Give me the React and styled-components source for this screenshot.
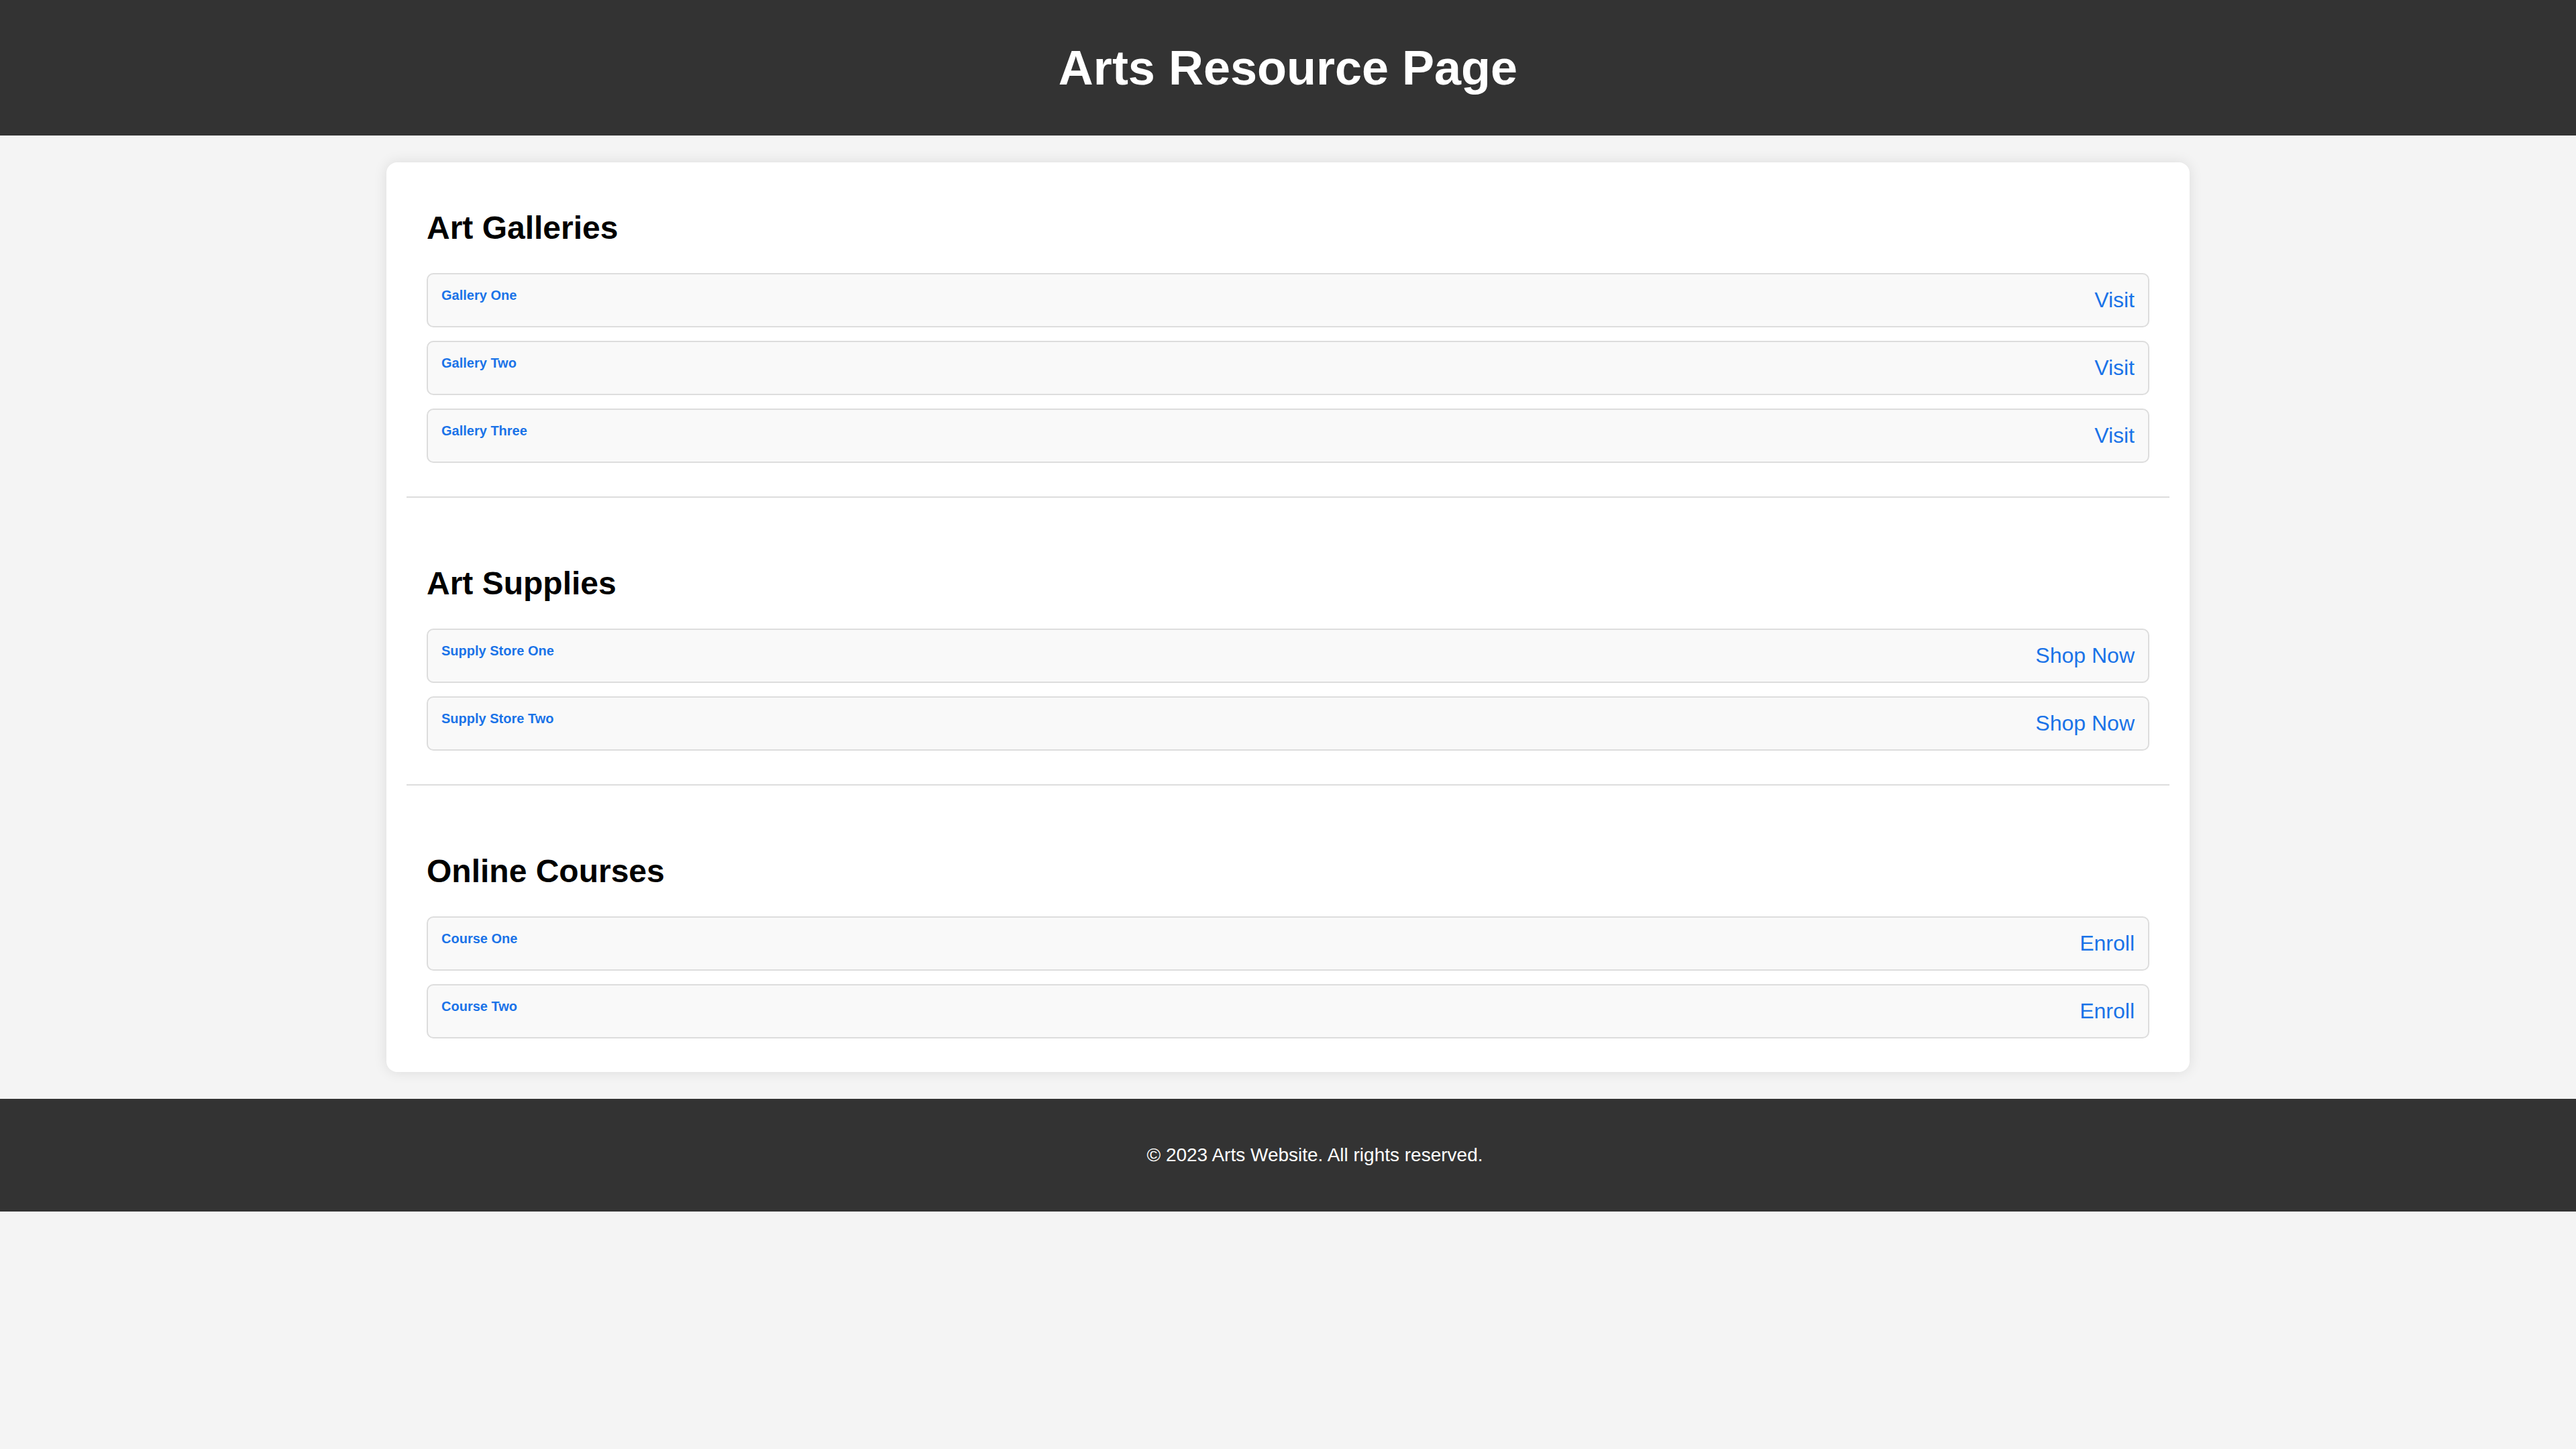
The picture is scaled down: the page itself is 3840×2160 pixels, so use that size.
import React from 'react';
import styled, { createGlobalStyle } from 'styled-components';

const GlobalStyle = createGlobalStyle`
  body {
    margin: 0;
    background: #f4f4f4;
    font-family: "Liberation Sans", Arial, Helvetica, sans-serif;
  }
`;

const Header = styled.header`
  background: #333;
  color: #fff;
  padding: 60px 0;
  text-align: center;
`;

const Titulo = styled.h1`
  margin: 0;
  font-size: 72px;
  line-height: 82px;
  font-weight: bold;
`;

const Card = styled.main`
  width: 70%;
  margin: 40px auto;
  padding: 30px;
  box-sizing: border-box;
  background: #fff;
  border-radius: 16px;
  box-shadow: 0 0 20px rgba(0, 0, 0, 0.1);
`;

const Secao = styled.section`
  padding: ${({ $first }) => ($first ? 0 : 60)}px 30px ${({ $last }) => ($last ? 0 : 30)}px;
  border-bottom: ${({ $last }) => ($last ? 'none' : '2px solid #ddd')};
`;

const SecaoTitulo = styled.h2`
  margin: 40px 0;
  font-size: 48px;
  font-weight: bold;
  color: #000;
`;

const Lista = styled.ul`
  list-style: none;
  margin: 0;
  padding: 0;
`;

const Item = styled.li`
  display: flex;
  justify-content: space-between;
  align-items: flex-start;
  margin-bottom: 20px;
  padding: 20px;
  background: #f9f9f9;
  border: 2px solid #ddd;
  border-radius: 10px;
`;

const Nome = styled.a`
  font-size: 20px;
  font-weight: bold;
  color: #1a73e8;
  text-decoration: none;
`;

const Acao = styled.a`
  font-size: 32px;
  color: #1a73e8;
  text-decoration: none;
  cursor: pointer;
`;

/* o texto do rodape fica um pouco a direita do centro */
const Rodape = styled.footer`
  background: #333;
  color: #fff;
  text-align: center;
  padding: 40px 0 40px 80px;

  p {
    margin: 28px 0;
    font-size: 28px;
  }
`;

const secoes = [
  {
    titulo: 'Art Galleries',
    acao: 'Visit',
    itens: ['Gallery One', 'Gallery Two', 'Gallery Three'],
  },
  {
    titulo: 'Art Supplies',
    acao: 'Shop Now',
    itens: ['Supply Store One', 'Supply Store Two'],
  },
  {
    titulo: 'Online Courses',
    acao: 'Enroll',
    itens: ['Course One', 'Course Two'],
  },
];

const App = () => {
  return (
    <>
      <GlobalStyle />
      <Header>
        <Titulo>Arts Resource Page</Titulo>
      </Header>
      <Card>
        {secoes.map((secao, i) => (
          <Secao key={secao.titulo} $first={i === 0} $last={i === secoes.length - 1}>
            <SecaoTitulo>{secao.titulo}</SecaoTitulo>
            <Lista>
              {secao.itens.map((nome) => (
                <Item key={nome}>
                  <Nome href="#">{nome}</Nome>
                  <Acao href="#">{secao.acao}</Acao>
                </Item>
              ))}
            </Lista>
          </Secao>
        ))}
      </Card>
      <Rodape>
        <p>© 2023 Arts Website. All rights reserved.</p>
      </Rodape>
    </>
  );
};

export default App;
